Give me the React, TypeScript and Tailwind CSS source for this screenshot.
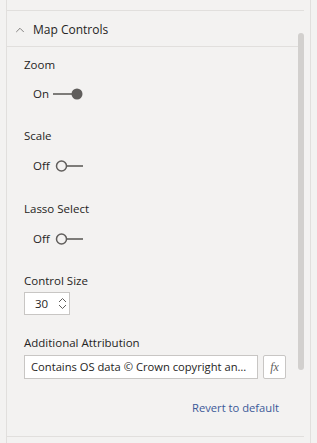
import { ChevronUp } from "lucide-react";

const FONT = { fontFamily: '"Open Sans", "Noto Sans", sans-serif' };

function Toggle({ on }: { on: boolean }) {
  return (
    <div className="flex h-[20px] items-center pl-[9px]">
      <span className="w-[19px] text-[11.5px] text-[#252423]">{on ? "On" : "Off"}</span>
      {on ? (
        <svg width="34" height="14" viewBox="0 0 34 14" className="ml-[1px]">
          <line x1="0" y1="7" x2="20" y2="7" stroke="#605e5c" strokeWidth="1.6" />
          <circle cx="24" cy="7" r="5.5" fill="#605e5c" />
        </svg>
      ) : (
        <svg width="34" height="14" viewBox="0 0 34 14">
          <circle cx="9.5" cy="7" r="5" fill="none" stroke="#605e5c" strokeWidth="1.5" />
          <line x1="14.5" y1="7" x2="31" y2="7" stroke="#605e5c" strokeWidth="1.6" />
        </svg>
      )}
    </div>
  );
}

function Label({ children }: { children: string }) {
  return <div className="flex h-[20px] items-center text-[11.5px] text-[#252423]">{children}</div>;
}

export default function App() {
  return (
    <div className="relative flex h-[443px] w-[317px] overflow-hidden bg-[#f3f2f1]" style={FONT}>
      <div className="w-[6px] shrink-0" />
      <div className="flex w-[305px] shrink-0 flex-col border-x border-[#e1dfdd]">
        <div className="mr-[6px] h-[11px] shrink-0 border-b border-[#e1dfdd]" />
        <div className="mr-[6px] flex h-[36px] shrink-0 items-center border-b border-[#e1dfdd] pt-[2px] pl-[6px]">
          <ChevronUp className="h-[14px] w-[14px] text-[#605e5c]" strokeWidth={1.3} />
          <span className="ml-[6px] text-[12px] text-[#252423]">Map Controls</span>
        </div>

        <div className="mr-[6px] flex flex-col pl-[17px]">
          <div className="mt-[8px]">
            <Label>Zoom</Label>
          </div>
          <div className="mt-[9px]">
            <Toggle on />
          </div>
          <div className="mt-[22px]">
            <Label>Scale</Label>
          </div>
          <div className="mt-[10px]">
            <Toggle on={false} />
          </div>
          <div className="mt-[23px]">
            <Label>Lasso Select</Label>
          </div>
          <div className="mt-[10px]">
            <Toggle on={false} />
          </div>
          <div className="mt-[22px]">
            <Label>Control Size</Label>
          </div>
          <div className="mt-[1px] flex h-[23px] w-[46px] items-center border border-[#c8c6c4] bg-white pl-[10px]">
            <span className="w-[23px] text-[11.5px] text-[#252423]">30</span>
            <div className="flex flex-col items-center">
              <svg width="9" height="6" viewBox="0 0 9 6">
                <path d="M1 5 L4.5 1.5 L8 5" fill="none" stroke="#605e5c" strokeWidth="1" />
              </svg>
              <svg width="9" height="6" viewBox="0 0 9 6" className="mt-[1px]">
                <path d="M1 1 L4.5 4.5 L8 1" fill="none" stroke="#605e5c" strokeWidth="1" />
              </svg>
            </div>
          </div>
          <div className="mt-[18px]">
            <Label>Additional Attribution</Label>
          </div>
          <div className="mt-[2px] flex items-center">
            <div className="flex h-[24px] w-[234px] items-center border border-[#c8c6c4] bg-white px-[6px]">
              <span className="truncate text-[11.2px] text-[#252423]">
                Contains OS data © Crown copyright and database right 2024
              </span>
            </div>
            <div className="ml-[5px] flex h-[24px] w-[23px] items-center justify-center rounded-[2px] border border-[#c8c6c4] bg-white">
              <span className="text-[12px] italic text-[#605e5c]" style={{ fontFamily: '"Liberation Serif", serif' }}>
                fx
              </span>
            </div>
          </div>
          <div className="mt-[19px] flex h-[20px] items-center justify-end pr-[25px]">
            <span className="text-[11.2px] text-[#3b5998]">Revert to default</span>
          </div>
        </div>
        <div className="mr-[6px] h-[19px] shrink-0 border-b border-[#e1dfdd]" />
      </div>

      <div className="absolute top-[33px] left-[298px] h-[337px] w-[6px] rounded-full bg-[#d2d0ce]" />
    </div>
  );
}
